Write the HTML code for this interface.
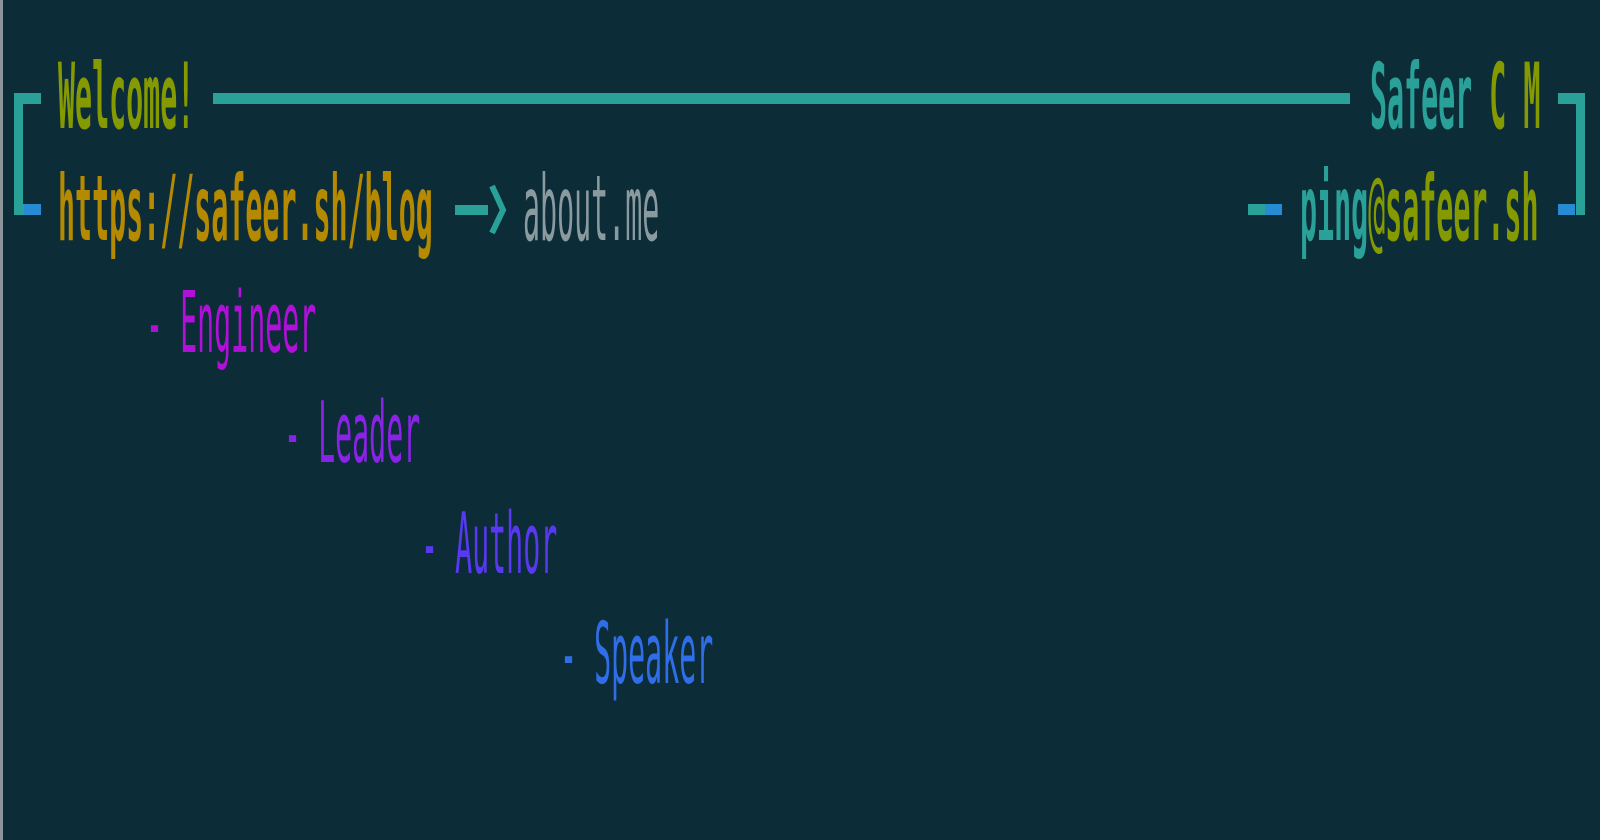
<!DOCTYPE html>
<html><head><meta charset="utf-8"><style>
html,body{margin:0;padding:0;background:#0c2d38;width:1600px;height:840px;overflow:hidden}
svg{display:block}
text{font-family:"DejaVu Sans Mono","Liberation Mono",monospace;}
</style></head><body>
<svg width="1600" height="840" xmlns="http://www.w3.org/2000/svg">
<rect width="1600" height="840" fill="#0c2d38"/>
<rect x="0" y="0" width="3" height="840" fill="#8a9499"/>
<rect x="14" y="93" width="27" height="11" fill="#2aa198"/>
<rect x="14" y="93" width="9" height="122" fill="#2aa198"/>
<rect x="14" y="204" width="10" height="11" fill="#2aa198"/>
<rect x="24" y="204" width="17" height="11" fill="#268bd2"/>
<rect x="213" y="93" width="1137" height="11" fill="#2aa198"/>
<rect x="1558" y="93" width="27" height="11" fill="#2aa198"/>
<rect x="1576" y="93" width="9" height="122" fill="#2aa198"/>
<rect x="1558" y="204" width="17" height="11" fill="#268bd2"/>
<rect x="1248" y="204" width="17" height="11" fill="#2aa198"/>
<rect x="1265" y="204" width="17" height="11" fill="#268bd2"/>
<rect x="455" y="205" width="33" height="10" fill="#2aa198"/>
<polyline points="492,186 503,210 492,233" fill="none" stroke="#2aa198" stroke-width="6"/>
<g font-size="28.3" font-weight="bold">
<text transform="translate(58,128) scale(1,3.2)" fill="#859900">Welcome!</text>
<text transform="translate(1370,128) scale(1,3.2)" fill="#2aa198">Safeer <tspan fill="#859900">C M</tspan></text>
<text transform="translate(58,240) scale(1,3.2)" fill="#b58900">https://safeer.sh/blog</text>
<text transform="translate(1300,240) scale(1,3.2)" fill="#2aa198">ping<tspan fill="#859900" font-weight="normal">@</tspan><tspan fill="#859900">safeer.sh</tspan></text>
</g>
<text transform="translate(523,240) scale(1,3.2)" font-size="28.3" fill="#8a9a9e">about.me</text>
<g font-size="28.3">
<text transform="translate(146,352) scale(1,3.0)" fill="#b010d8">- Engineer</text>
<text transform="translate(284,462) scale(1,3.0)" fill="#8a22e8">- Leader</text>
<text transform="translate(421,573) scale(1,3.0)" fill="#5838f2">- Author</text>
<text transform="translate(560,683) scale(1,3.0)" fill="#2f6ee8">- Speaker</text>
</g>
</svg>
</body></html>
